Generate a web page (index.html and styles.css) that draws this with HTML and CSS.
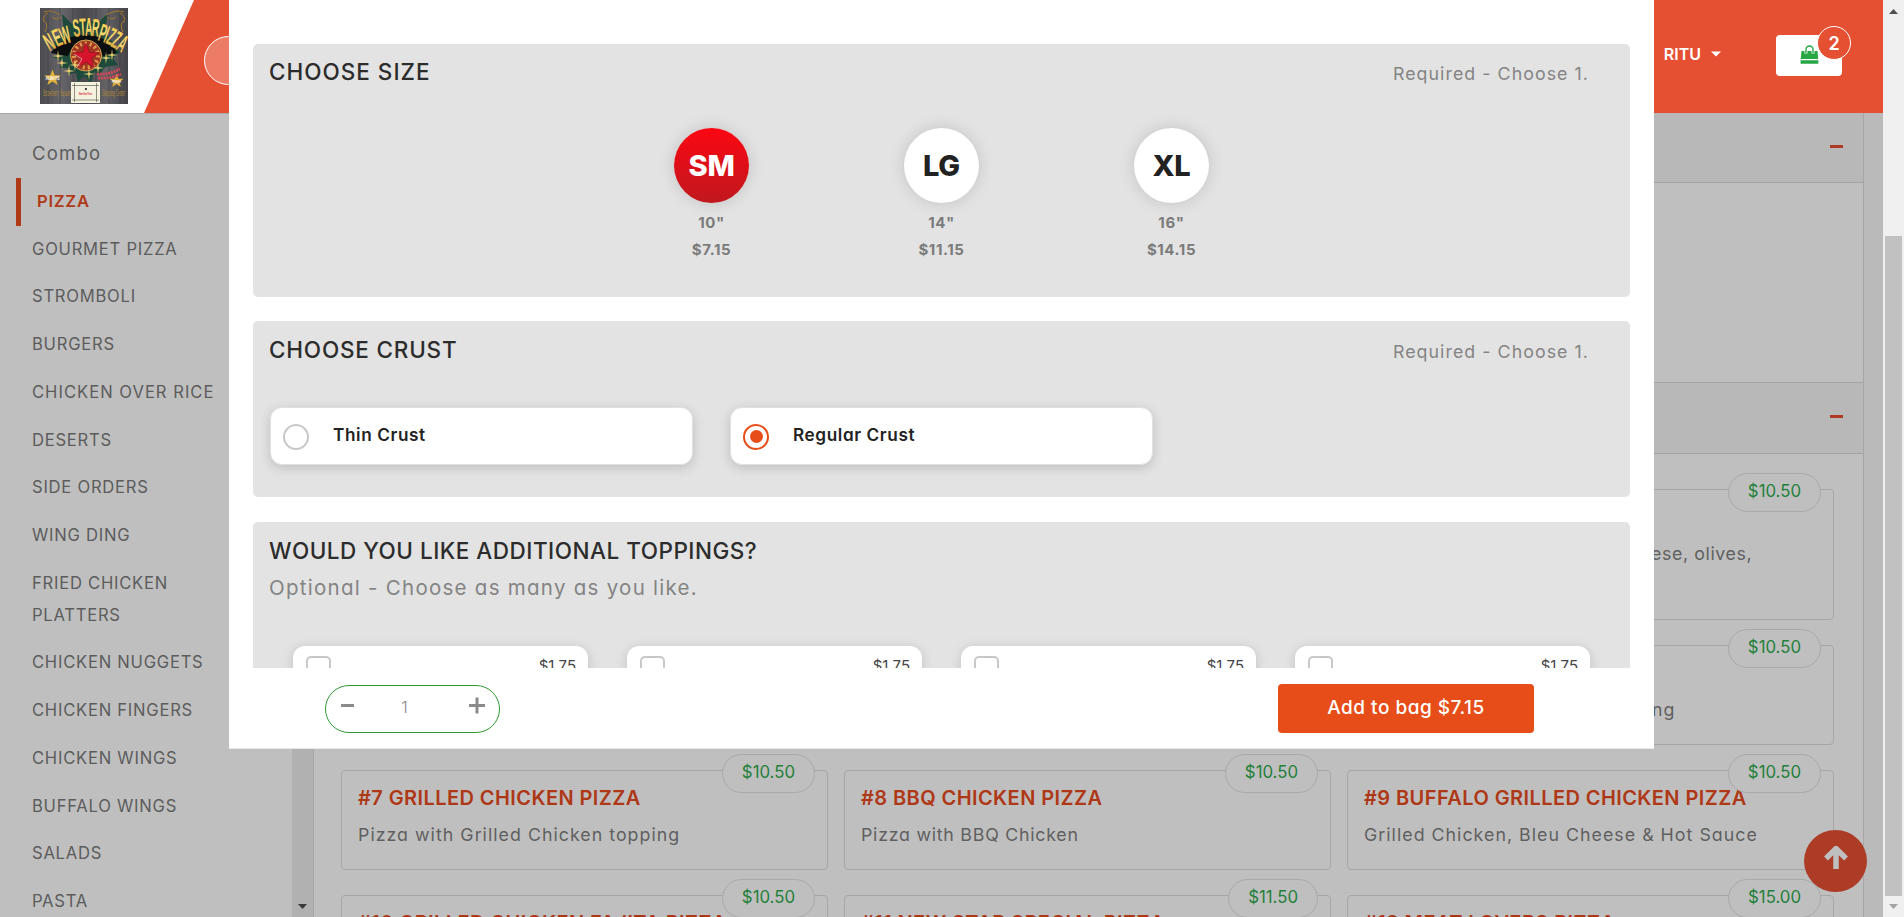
FILE: index.html
```html
<!DOCTYPE html>
<html lang="en">
<head>
<meta charset="utf-8">
<title>New Star Pizza</title>
<link rel="stylesheet" href="styles.css">
</head>
<body>
<div class="window">
  <div class="page">
    <header class="header">
      <div class="brand">
        <svg class="logo" viewBox="0 0 88 96" width="88" height="96">
          <defs>
            <linearGradient id="wood" x2="1"><stop offset="0" stop-color="#4b4b4f"/><stop offset=".25" stop-color="#65656a"/><stop offset=".5" stop-color="#47474b"/><stop offset=".75" stop-color="#626267"/><stop offset="1" stop-color="#434347"/></linearGradient>
            <linearGradient id="gold" x2="0" y2="1"><stop offset="0" stop-color="#f5c33c"/><stop offset=".5" stop-color="#f8dd72"/><stop offset="1" stop-color="#c98a1c"/></linearGradient>
            <path id="star" d="M0-10 2.6-3.2 9.7-3 4.1 1.4 6 8.2 0 4.2-6 8.2-4.100 1.400-9.700-3-2.600-3.200Z"/>
            <path id="spark" d="M0-6 .7-.7 6 0 .7.7 0 6-.7.7-6 0-.7-.7Z"/>
          </defs>
          <rect width="88" height="96" fill="url(#wood)"/>
          <path d="M8 0v96M20 0v96M33 0v96M56 0v96M69 0v96M80 0v96" stroke="#37373b" stroke-width=".7" opacity=".7"/>
          <path d="M22 6 32 16 45 11 58 15 68 5 65 24 80 44 73 50 78 57 65 59 60 66 54 64 51 75 44 68 38 74 36 65 28 66 29 60 20 60 23 53 13 49 20 44 12 36 24 25Z" fill="#1d4a3b"/>
          <path d="M11 45Q22 27 45 27T77 45L63 48Q56 32 45 32T28 48Z" fill="#0c0f10"/>
          <circle cx="46" cy="47.500" r="15.500" fill="#9e3724" stroke="#d9a94f"/>
          <circle cx="46" cy="47.500" r="12" fill="none" stroke="#e59b4e" stroke-width="4" stroke-dasharray="2 3"/>
          <use href="#star" transform="translate(46 48.500) scale(1.320)" fill="#d6132c" stroke="#8e1020" stroke-width=".5"/>
          <path d="M34 46 42 51 37 59" fill="none" stroke="#f1b8b8" stroke-width=".8"/>
          <g fill="url(#gold)" class="logo-name">
            <text transform="translate(9.500 43.500) rotate(-28) scale(.46 1)">N</text>
            <text transform="translate(17 39) rotate(-23) scale(.46 1)">E</text>
            <text transform="translate(23 37) rotate(-18) scale(.42 1)">W</text>
            <text transform="translate(34 29) rotate(-8) scale(.42 1)">S</text>
            <text transform="translate(40 28) rotate(-3) scale(.42 1)">T</text>
            <text transform="translate(45 28) scale(.42 1)">A</text>
            <text transform="translate(51 28) rotate(6) scale(.42 1)">R</text>
            <text transform="translate(57 32) rotate(17) scale(.42 1)">P</text>
            <text transform="translate(62.500 34) rotate(20) scale(.42 1)">I</text>
            <text transform="translate(65 35) rotate(24) scale(.42 1)">Z</text>
            <text transform="translate(70 38) rotate(27) scale(.42 1)">Z</text>
            <text transform="translate(75 41) rotate(31) scale(.42 1)">A</text>
          </g>
          <g fill="#f6d777"><use href="#spark" x="18" y="48"/><use href="#spark" x="22" y="55"/><use href="#spark" x="35" y="57"/><use href="#spark" x="29" y="63"/><use href="#spark" x="49" y="66"/><use href="#spark" x="58" y="60"/><use href="#spark" x="66" y="50"/><use href="#spark" x="72" y="47"/></g>
          <use href="#star" transform="translate(12.500 70) scale(.85)" fill="#e2b13d"/>
          <use href="#star" transform="translate(76.500 73) scale(.72)" fill="#e2b13d"/>
          <g font-family="Liberation Sans" font-weight="700">
            <text x="5.500" y="72" font-size="4.500" textLength="14" lengthAdjust="spacingAndGlyphs" fill="#fff">ALWAYS</text>
            <text x="72" y="75" font-size="4" textLength="9" lengthAdjust="spacingAndGlyphs" fill="#fff">FRESH</text>
          </g>
          <path d="M57 66Q69 67 80 61M58 70Q70 71 81 66" fill="none" stroke="#d5485a" stroke-width="2.600" stroke-dasharray="2 .8"/>
          <path d="M4 4Q11 1 20 7M4 14Q2 8 8 5M5 24Q9 16 4 13M84 4Q77 1 66 7M84 14Q86 8 80 5M83 24Q79 16 84 13M12 9q4 4 9 0M76 9q-4 4-9 0" fill="none" stroke="#a5772b" stroke-width="1"/>
          <g fill="#b48a39" class="logo-place">
            <text transform="translate(3 88) scale(.37 1)">Strawberry Square</text>
            <text transform="translate(62 88) scale(.34 1)">Shopping Center</text>
          </g>
          <rect x="31" y="74" width="29" height="21" fill="#f4f1df"/>
          <path d="M32 77.500h27M32 92h27M34.500 75v19M56.500 75v19" stroke="#4a4a40" stroke-width=".6"/>
          <rect x="45" y="80" width="1.800" height="2" fill="#333"/>
          <text x="39" y="87" font-family="Liberation Sans" font-weight="700" font-size="3.600" textLength="13" lengthAdjust="spacingAndGlyphs" fill="#d6132c">New Star Pizza</text>
        </svg>
      </div>
      <div class="ribbon">
        <div class="search-dot"></div>
        <div class="user">RITU<svg width="10" height="6" viewBox="0 0 10 6"><path d="M0 .5H10L5 5.500Z" fill="#fff"/></svg></div>
        <div class="bag">
          <svg width="19" height="19" viewBox="0 0 19 19"><path d="M1.500 6H17.500L18.200 14H.7ZM.6 15.200H18.400V18.700H.6Z" fill="#28a745"/><path d="M6 8.500V4.500a3.500 3.500 0 0 1 7 0V8.500" fill="none" stroke="#fff" stroke-width="3"/><path d="M6 8V4.500a3.500 3.500 0 0 1 7 0V8" fill="none" stroke="#28a745" stroke-width="1.400"/></svg>
          <span class="count">2</span>
        </div>
      </div>
    </header>
    <div class="body">
      <nav class="side">
        <a>Combo</a>
        <a class="active">PIZZA</a>
        <a>GOURMET PIZZA</a>
        <a>STROMBOLI</a>
        <a>BURGERS</a>
        <a class="long">CHICKEN OVER RICE</a>
        <a>DESERTS</a>
        <a>SIDE ORDERS</a>
        <a>WING DING</a>
        <a>FRIED CHICKEN PLATTERS</a>
        <a>CHICKEN NUGGETS</a>
        <a>CHICKEN FINGERS</a>
        <a>CHICKEN WINGS</a>
        <a>BUFFALO WINGS</a>
        <a>SALADS</a>
        <a>PASTA</a>
      </nav>
      <div class="side-scroll"><svg width="9" height="5" viewBox="0 0 9 5"><path d="M0 0H9L4.500 5Z" fill="#3a3a3a"/></svg></div>
      <main class="menu">
        <div class="fold first"><i></i></div>
        <div class="fold-body"></div>
        <div class="fold"><i></i></div>
        <div class="cards">
          <article class="card"></article>
          <article class="card"></article>
          <article class="card tail"><span class="price">$10.50</span><p class="olives">ese, olives,</p></article>
          <article class="card"></article>
          <article class="card"></article>
          <article class="card tail"><span class="price">$10.50</span><p class="topping">ng</p></article>
          <article class="card"><span class="price">$10.50</span><h3>#7 GRILLED CHICKEN PIZZA</h3><p>Pizza with Grilled Chicken topping</p></article>
          <article class="card"><span class="price">$10.50</span><h3>#8 BBQ CHICKEN PIZZA</h3><p class="snug">Pizza with BBQ Chicken</p></article>
          <article class="card"><span class="price">$10.50</span><h3>#9 BUFFALO GRILLED CHICKEN PIZZA</h3><p>Grilled Chicken, Bleu Cheese &amp; Hot Sauce</p></article>
          <article class="card"><span class="price">$10.50</span><h3>#10 GRILLED CHICKEN FAJITA PIZZA</h3></article>
          <article class="card"><span class="price">$11.50</span><h3>#11 NEW STAR SPECIAL PIZZA</h3></article>
          <article class="card"><span class="price">$15.00</span><h3>#12 MEAT LOVERS PIZZA</h3></article>
        </div>
      </main>
    </div>
    <div class="to-top"><svg width="26" height="24" viewBox="0 0 26 24"><path d="M3 12.500 13 2.500 23 12.500M13 4V23" fill="none" stroke="#bfbfbf" stroke-width="5.500"/></svg></div>
  </div>
  <div class="scrollbar">
    <svg width="9" height="5" viewBox="0 0 9 5"><path d="M0 5H9L4.500 0Z" fill="#505050"/></svg>
    <div class="thumb"></div>
    <svg width="9" height="5" viewBox="0 0 9 5"><path d="M0 0H9L4.500 5Z" fill="#a3a3a3"/></svg>
  </div>

  <div class="modal">
    <div class="modal-body">
      <section class="panel sizes-panel">
        <div class="panel-head"><h2 class="t-size">CHOOSE SIZE</h2><span class="required">Required - Choose 1.</span></div>
        <div class="sizes">
          <div class="size on"><b>SM</b><span>10"</span><span>$7.15</span></div>
          <div class="size"><b>LG</b><span>14"</span><span>$11.15</span></div>
          <div class="size"><b>XL</b><span>16"</span><span>$14.15</span></div>
        </div>
      </section>
      <section class="panel crust-panel">
        <div class="panel-head"><h2 class="t-crust">CHOOSE CRUST</h2><span class="required">Required - Choose 1.</span></div>
        <div class="crusts">
          <label class="crust"><i class="radio"></i>Thin Crust</label>
          <label class="crust"><i class="radio on"></i>Regular Crust</label>
        </div>
      </section>
      <section class="panel toppings-panel">
        <h2 class="t-top">WOULD YOU LIKE ADDITIONAL TOPPINGS?</h2>
        <p class="optional">Optional - Choose as many as you like.</p>
        <div class="toppings">
          <div class="topping-card"><i></i><span>$1.75</span></div>
          <div class="topping-card"><i></i><span>$1.75</span></div>
          <div class="topping-card"><i></i><span>$1.75</span></div>
          <div class="topping-card"><i></i><span>$1.75</span></div>
        </div>
      </section>
    </div>
    <footer class="modal-foot">
      <div class="qty">
        <svg width="13" height="17" viewBox="0 0 13 17"><path d="M0 8.500H13" stroke="#8a8a8a" stroke-width="3"/></svg>
        <span>1</span>
        <svg width="16" height="17" viewBox="0 0 16 17"><path d="M0 8.500H16M8 .5V16.500" stroke="#8a8a8a" stroke-width="3"/></svg>
      </div>
      <button class="add">Add to bag $7.15</button>
    </footer>
  </div>
</div>
</body>
</html>
```
FILE: styles.css
```css
* { box-sizing: border-box; }
body { margin: 0; overflow: hidden; font-family: Inter, "Open Sans", sans-serif; font-feature-settings: "cv11"; }
h2, h3, p { margin: 0; }
.window { position: relative; display: flex; width: 1904px; height: 917px; overflow: hidden; background: #bfbfbf; }
.page { position: relative; flex: 1; display: flex; flex-direction: column; min-width: 0; height: 917px; }

.header { flex: none; display: flex; height: 113px; background: #fff; }
.brand { width: 144px; padding: 8px 0 0 40px; }
.logo { display: block; }
.logo-name { font: 700 25px "Liberation Sans", sans-serif; }
.logo-place { font: 10px "Liberation Serif", serif; }
.ribbon { flex: 1; display: flex; align-items: flex-start; padding-left: 60px; background: #e55032; clip-path: polygon(50px 0, 100% 0, 100% 100%, 0 100%); }
.search-dot { width: 300px; height: 49px; margin-top: 36px; border: 1px solid #fff; border-radius: 25px; background: #ec7c66; }
.user { display: flex; align-items: center; gap: 10px; margin: 41px 55px 0 auto; color: #fff; font-size: 16px; font-weight: 600; line-height: 26px; }
.bag { position: relative; display: flex; justify-content: center; width: 66px; height: 41px; margin: 35px 41px 0 0; padding-top: 10px; border-radius: 4px; background: #fff; }
.count { position: absolute; left: 41px; top: -9px; width: 34px; height: 34px; border: 1px solid #fff; border-radius: 50%; background: #e55032; color: #fff; font-size: 18px; font-weight: 600; line-height: 33px; text-align: center; }

.body { flex: 1; display: flex; min-height: 0; overflow: hidden; background: linear-gradient(90deg, #bfbfbf 1864px, #bababa 1864px); }
.side { width: 292px; padding-top: 16px; border-top: 1px solid #a9a9a9; }
.side a { display: block; width: 236px; margin-left: 16px; padding: 8px 0 8px 16px; color: #5c5c5c; font-size: 16.600px; line-height: 31.750px; letter-spacing: .75px; }
.side a:first-child { font-size: 18.500px; letter-spacing: 1.200px; }
.side a.long { letter-spacing: 1px; }
.side a.active { border-left: 5px solid #b03a17; color: #b03a17; font-weight: 600; }
.side-scroll { display: flex; align-items: flex-end; justify-content: center; width: 21px; padding-bottom: 8px; background: #b1b1b1; }
.menu { flex: 1; margin-right: 19px; border: solid #a6a6a6; border-width: 0 1px; }
.fold { display: flex; align-items: center; justify-content: flex-end; height: 72px; padding-right: 20px; border: solid #a3a3a3; border-width: 1px 0; background: #b8b8b8; }
.fold.first { height: 70px; border-top: 0; }
.fold i { width: 13px; height: 3px; margin-bottom: 4px; background: #b03b24; }
.fold.first i { margin-bottom: 3px; }
.fold-body { height: 199px; }
.cards { display: grid; grid-template-columns: repeat(3, 487px); grid-template-rows: 131px 100px 100px 100px; column-gap: 16px; row-gap: 25px; padding: 35px 0 0 27px; }
.card { position: relative; padding: 14px 16px; border: 1px solid #a6a6a6; border-radius: 4px; }
.card h3 { color: #ae3816; font-size: 20px; font-weight: 600; line-height: 26px; letter-spacing: .42px; white-space: nowrap; }
.card p { margin-top: 8px; color: #5f5f5f; font-size: 17.800px; line-height: 32px; letter-spacing: 1.020px; white-space: nowrap; }
.card p.snug { letter-spacing: .75px; }
.card.tail p { margin-top: 34px; }
.card p.olives { padding-left: 287px; letter-spacing: .6px; }
.card p.topping { padding-left: 288px; }
.price { position: absolute; right: 12px; top: -17px; height: 39px; padding: 0 19px; border: 1px solid #a9a9a9; border-radius: 20px; background: #bfbfbf; color: #23803a; font-size: 16.800px; line-height: 35px; letter-spacing: 0; }
.to-top { position: absolute; right: 16px; top: 830px; display: flex; align-items: center; justify-content: center; width: 63px; height: 62px; padding-bottom: 6px; border-radius: 50%; background: #ac3c26; }

.scrollbar { display: flex; flex-direction: column; align-items: center; width: 21px; padding: 9px 0 8px; background: #f0f0f0; }
.thumb { width: 17px; height: 660px; margin: 222px 0 auto; background: #c1c1c1; }

.modal { position: absolute; left: 229px; top: 0; display: flex; flex-direction: column; width: 1425px; height: 749px; background: #fff; }
.modal-body { height: 668px; padding: 44px 24px 0; overflow: hidden; }
.panel { border-radius: 5px; background: #e3e3e3; }
.panel-head { display: flex; justify-content: space-between; align-items: flex-start; padding: 13px 41px 0 16px; }
h2 { color: #2c2c2c; font-size: 22.500px; font-weight: 500; line-height: 30px; }
.t-size { letter-spacing: 1px; }
.t-crust { letter-spacing: .8px; }
.t-top { letter-spacing: .5px; }
.required { margin-top: 2px; color: #848484; font-size: 17.800px; line-height: 30px; letter-spacing: 1.050px; }
.sizes-panel { height: 253px; }
.sizes { display: flex; justify-content: center; gap: 155px; margin: 39px 8px 0 0; }
.size { display: flex; flex-direction: column; align-items: center; width: 75px; color: #7b7b7b; font-size: 15px; font-weight: 700; line-height: 27px; letter-spacing: .6px; }
.size b { width: 75px; height: 75px; margin-bottom: 6px; border-radius: 50%; background: #fff; box-shadow: 0 0 16px rgba(0, 0, 0, .15); color: #222; font-size: 29px; font-weight: 800; line-height: 75px; letter-spacing: -.3px; text-align: center; }
.sizes { margin-right: 0; }
.size.on b { background: linear-gradient(#fb0712, #c0181e); color: #fff; }
.crust-panel { height: 176px; margin-top: 24px; }
.crust-panel .panel-head { padding-top: 14px; }
.crusts { display: flex; gap: 37px; margin-top: 40px; padding-left: 17px; }
.crust { display: flex; align-items: center; gap: 24px; width: 423px; height: 58px; padding: 0 0 3px 12px; border: 1px solid #dfe1e6; border-radius: 12px; background: #fff; box-shadow: 0 3px 12px rgba(0, 0, 0, .16); color: #222; font-size: 17.200px; font-weight: 600; letter-spacing: .6px; }
.radio { display: flex; align-items: center; justify-content: center; width: 26px; height: 26px; margin-top: 4px; border: 2px solid #c8c8c8; border-radius: 50%; }
.radio.on { border-color: #e64d18; }
.radio.on::after { content: ""; width: 13px; height: 13px; border-radius: 50%; background: #e64d18; }
.toppings-panel { height: 260px; margin-top: 25px; padding: 14px 40px 0 16px; }
.optional { margin-top: 7px; color: #848484; font-size: 20.500px; line-height: 30px; letter-spacing: 1.270px; }
.toppings { display: grid; grid-template-columns: repeat(4, 295px); gap: 39px; margin: 43px 0 0 24px; }
.topping-card { display: flex; justify-content: space-between; height: 80px; padding: 10px 12px 10px 13px; border-radius: 12px; background: #fff; box-shadow: 0 2px 12px rgba(0, 0, 0, .15); color: #444; font-size: 15px; line-height: 20px; }
.topping-card i { width: 25px; height: 25px; border: 2px solid #c8c8c8; border-radius: 5px; }
.modal-foot { display: flex; justify-content: space-between; height: 81px; padding: 16px 120px 0 96px; border-bottom: 1px solid #e8e8e8; }
.qty { display: flex; justify-content: space-between; align-items: flex-start; width: 175px; height: 48px; margin-top: 1px; padding: 11px 14px 0 15px; border: 1px solid #2f9a35; border-radius: 24px; }
.qty span { margin-right: 14px; color: #8a8a8a; font-size: 16.500px; font-weight: 300; line-height: 21px; }
.qty svg { display: block; }
.add { width: 256px; height: 49px; padding: 0 0 3px; border: 0; border-radius: 4px; background: #e64d18; color: #fff; font: 500 19px Inter, sans-serif; font-feature-settings: "cv11"; letter-spacing: .5px; }
```
